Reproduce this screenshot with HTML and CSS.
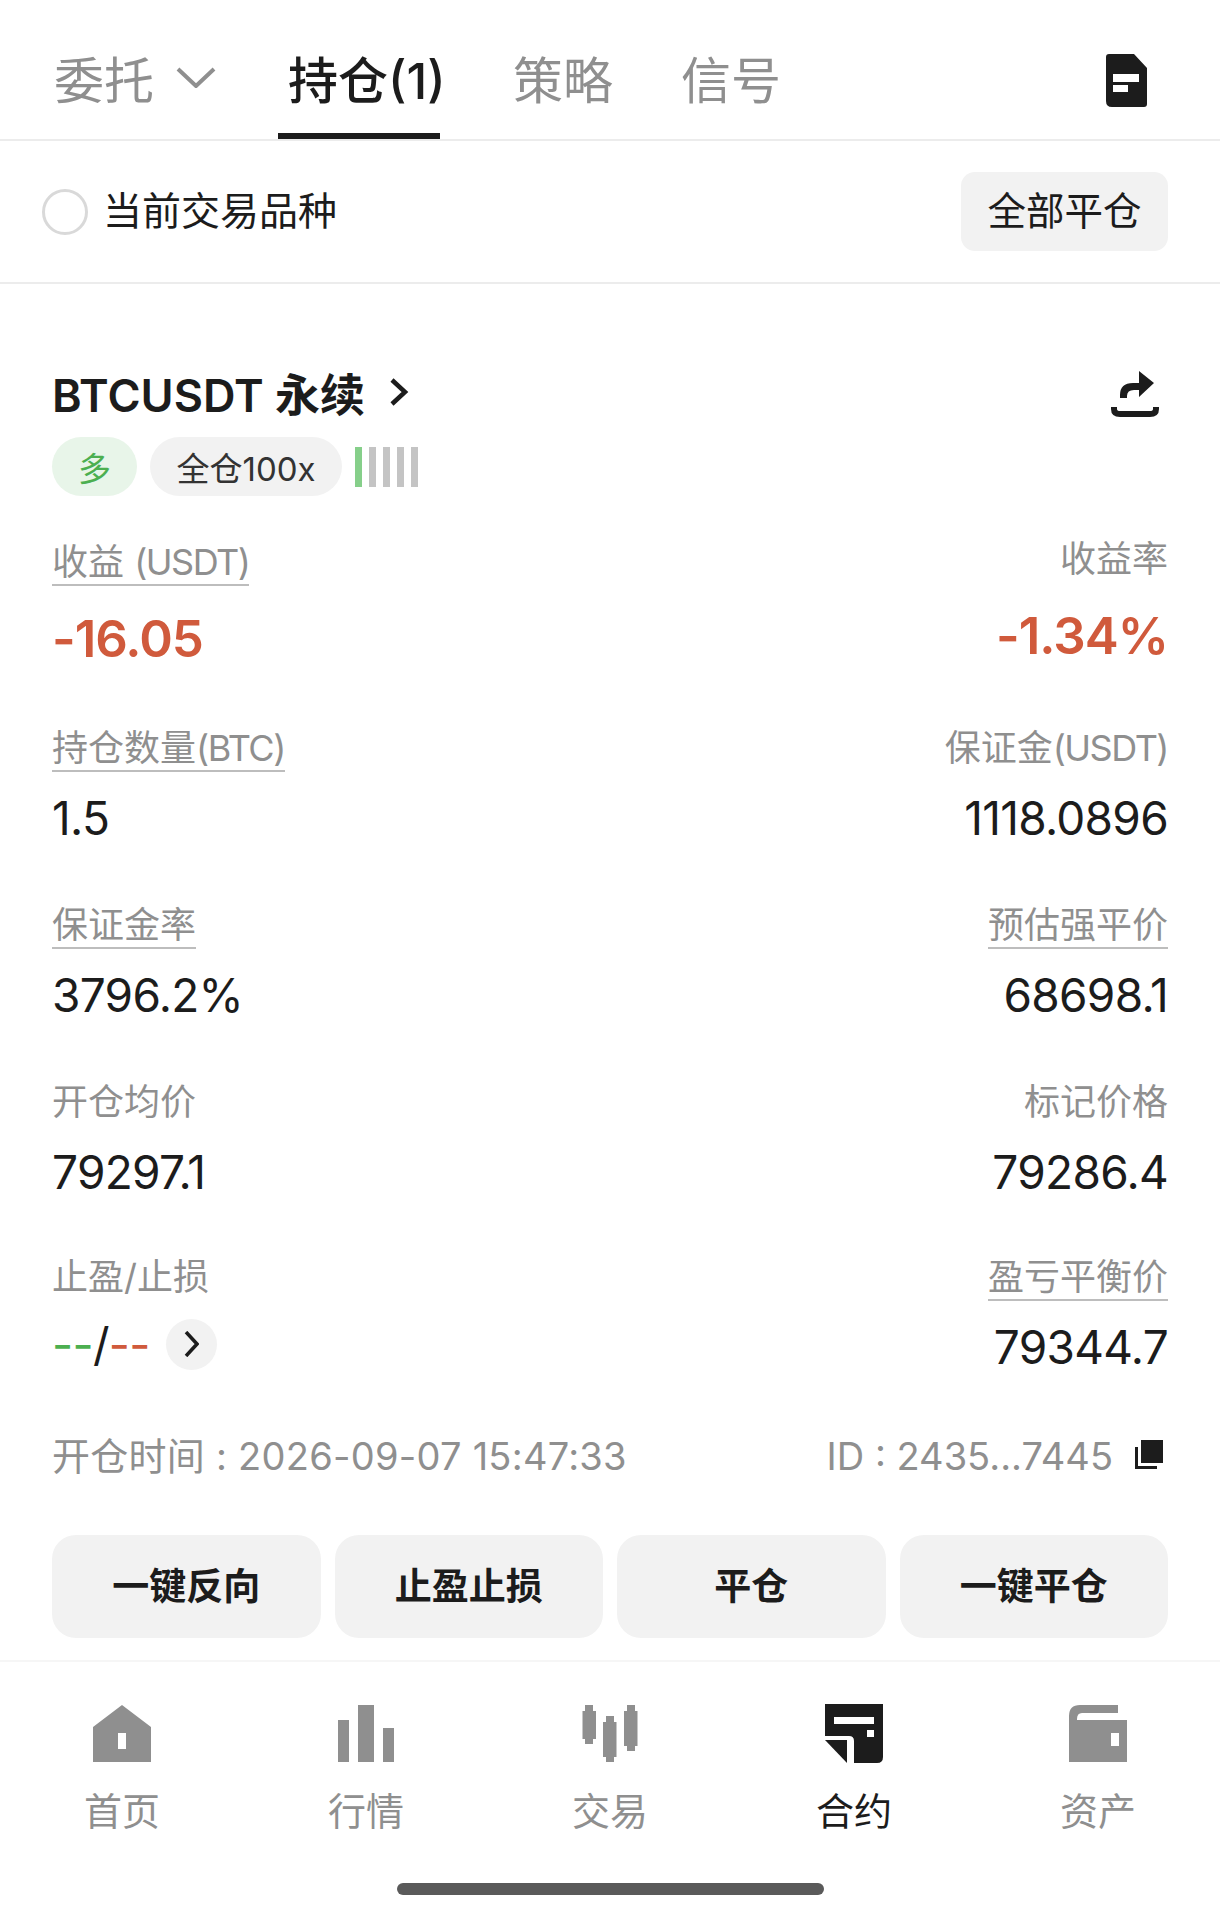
FILE: index.html
```html
<!DOCTYPE html>
<html lang="zh-CN">
<head>
  <meta charset="UTF-8" />
  <meta name="viewport" content="width=device-width, initial-scale=1.0">
  <title>持仓</title>
  <link rel="stylesheet" href="styles.css">
</head>
<body>

<!-- Tabs -->
<div class="tabs">
  <div class="tab tab-orders">委托
    <svg class="tab-caret" width="40" height="21" viewBox="0 0 40 21"><path d="M2 2 L20 19 L38 2" /></svg>
  </div>
  <div class="tab tab-active">持仓(1)</div>
  <div class="tab tab-strategy">策略</div>
  <div class="tab tab-signal">信号</div>
  <svg class="tab-doc" width="41" height="53" viewBox="0 0 41 53">
    <path fill-rule="evenodd" d="M3 0 H28 L41 14 V50 Q41 53 38 53 H6 Q0 53 0 47 V3 Q0 0 3 0 Z M7 20 V28 H33 V20 Z M7 31 V38 H22 V31 Z" />
  </svg>
</div>

<!-- Filter -->
<div class="filter">
  <div class="filter-left">
    <span class="radio"></span>
    <span class="filter-text">当前交易品种</span>
  </div>
  <div class="close-all">全部平仓</div>
</div>

<!-- Position card -->
<div class="card">
  <div class="card-title">
    <div class="symbol">BTCUSDT 永续
      <svg class="symbol-arrow" width="20" height="28" viewBox="0 0 20 28"><path d="M3 2 L16 14 L3 26" /></svg>
    </div>
    <svg class="share" width="48" height="46" viewBox="0 0 48 46">
      <path d="M9 27 V24 Q9 12 22 12 H28 V0 L43 12 L28 26 V19 H23 Q16 19 16 25 V27 Z" />
      <path class="share-tray" d="M3 36 V38 Q3 43 9 43 H39 Q45 43 45 38 V36" />
    </svg>
  </div>

  <div class="tags">
    <span class="tag tag-long">多</span>
    <span class="tag tag-mode">全仓100x</span>
    <span class="risk">
      <i class="risk-on"></i><i></i><i></i><i></i><i></i>
    </span>
  </div>

  <div class="stats">
    <div class="stat">
      <span class="stat-label dotted">收益 <span class="latin">(USDT)</span></span>
      <span class="stat-value big red">-16.05</span>
    </div>
    <div class="stat stat-right stat-up">
      <span class="stat-label">收益率</span>
      <span class="stat-value big red">-1.34%</span>
    </div>

    <div class="stat">
      <span class="stat-label dotted">持仓数量<span class="latin">(BTC)</span></span>
      <span class="stat-value">1.5</span>
    </div>
    <div class="stat stat-right">
      <span class="stat-label">保证金<span class="latin">(USDT)</span></span>
      <span class="stat-value">1118.0896</span>
    </div>

    <div class="stat">
      <span class="stat-label dotted">保证金率</span>
      <span class="stat-value">3796.2%</span>
    </div>
    <div class="stat stat-right">
      <span class="stat-label dotted">预估强平价</span>
      <span class="stat-value">68698.1</span>
    </div>

    <div class="stat">
      <span class="stat-label">开仓均价</span>
      <span class="stat-value">79297.1</span>
    </div>
    <div class="stat stat-right">
      <span class="stat-label">标记价格</span>
      <span class="stat-value">79286.4</span>
    </div>

    <div class="stat stat-last">
      <span class="stat-label">止盈/止损</span>
      <div class="tpsl">
        <span class="stat-value"><span class="green">--</span>/<span class="red">--</span></span>
        <span class="tpsl-btn">
          <svg width="15" height="26" viewBox="0 0 15 26"><path d="M2 1 L13 13 L2 25" /></svg>
        </span>
      </div>
    </div>
    <div class="stat stat-right stat-last">
      <span class="stat-label dotted">盈亏平衡价</span>
      <span class="stat-value">79344.7</span>
    </div>
  </div>

  <div class="meta">
    <span class="meta-time">开仓时间 : 2026-09-07 15:47:33</span>
    <span class="meta-id">ID : 2435...7445
      <svg width="28" height="29" viewBox="0 0 28 29">
        <rect x="6" y="0" width="22" height="23" />
        <path d="M0 7 H3 V26 H22 V29 H0 Z" />
      </svg>
    </span>
  </div>

  <div class="actions">
    <div class="action">一键反向</div>
    <div class="action">止盈止损</div>
    <div class="action">平仓</div>
    <div class="action">一键平仓</div>
  </div>
</div>

<!-- Bottom nav -->
<div class="nav">
  <div class="nav-item">
    <svg width="60" height="60" viewBox="0 0 60 60">
      <path fill-rule="evenodd" d="M30 2 L59 24 V59 H1 V24 Z M26 30 V46 H34 V30 Z" />
    </svg>
    <span>首页</span>
  </div>
  <div class="nav-item">
    <svg width="60" height="60" viewBox="0 0 60 60">
      <rect x="2" y="17" width="11" height="42" />
      <rect x="22" y="2" width="16" height="57" />
      <rect x="47" y="25" width="11" height="34" />
    </svg>
    <span>行情</span>
  </div>
  <div class="nav-item">
    <svg width="60" height="60" viewBox="0 0 60 60">
      <path d="M5 2 H13 V8 H16 V36 H13 V41 H5 V36 H2.500 V8 H5 Z" />
      <path d="M26 13 H34 V19 H36.500 V54 H34 V59 H26 V54 H23 V19 H26 Z" />
      <path d="M47 2 H55 V8 H57.500 V43 H55 V48 H47 V43 H44 V8 H47 Z" />
    </svg>
    <span>交易</span>
  </div>
  <div class="nav-item nav-active">
    <svg width="60" height="60" viewBox="0 0 60 60">
      <path fill-rule="evenodd" d="M1 1 H59 V54 Q59 60 53 60 H30 V38 Q30 33 25 33 H1 Z M10 14 V21 H50 V14 Z M43 27 V34 H50 V27 Z" />
      <path d="M1 37 H23 V60 Z" />
    </svg>
    <span>合约</span>
  </div>
  <div class="nav-item">
    <svg width="60" height="60" viewBox="0 0 60 60">
      <path fill-rule="evenodd" d="M12 2 H50 V10 H14 Q9 10 9 16 V17 H59 V59 H1 V13 Q1 2 12 2 Z M43 30 V43 H51 V30 Z" />
    </svg>
    <span>资产</span>
  </div>
</div>

<div class="home-bar-wrap"><div class="home-bar"></div></div>

</body>
</html>
```

FILE: styles.css
```css
/* ----------  BASE  ---------- */
:root {
  --ink:    #1c1c1c;
  --grey:   #8f8f8f;
  --soft:   #f2f2f2;
  --line:   #ececec;
  --red:    #d05a3c;
  --green:  #4caf50;
}

*{box-sizing:border-box}

body{
  margin:0;
  width:1220px;
  background:#fff;
  color:var(--ink);
  font-family:Inter,'Noto Sans CJK SC',sans-serif;
}

svg{display:block}

/* ----------  TABS  ---------- */
.tabs{
  display:flex; align-items:center;
  height:141px;
  padding-left:54px;
  border-bottom:2px solid var(--line);
  position:relative;
}
.tab{
  display:flex; align-items:center;
  height:139px;
  padding-top:14px;
  font-size:50px;
  color:var(--grey);
}
.tab-orders{width:224px}
.tab-caret{margin-left:22px;margin-top:2px}
.tab-caret path{fill:none;stroke:var(--grey);stroke-width:4}
.tab-active{
  width:235px;
  color:var(--ink);
  font-weight:500;
  padding-left:10px;
  position:relative;
}
.tab-active::after{
  content:"";
  position:absolute;
  left:0; bottom:0;
  width:162px; height:6px;
  background:var(--ink);
}
.tab-strategy{width:168px}
.tab-doc{margin-left:auto;margin-right:73px;margin-top:21px}
.tab-doc path{fill:var(--ink)}

/* ----------  FILTER  ---------- */
.filter{
  display:flex; align-items:center; justify-content:space-between;
  height:143px;
  padding:0 52px 0 42px;
  border-bottom:2px solid var(--line);
  font-size:38.500px;
}
.filter-left{display:flex;align-items:center;gap:15px}
.filter-text{font-size:39px;padding-bottom:8px}
.radio{
  width:46px; height:46px;
  border:3px solid #d9d9d9;
  border-radius:50%;
}
.close-all{
  display:flex; align-items:center; justify-content:center;
  width:207px; height:79px;
  padding-bottom:8px;
  background:var(--soft);
  border-radius:14px;
}

/* ----------  CARD  ---------- */
.card{padding:82px 52px 22px}
.card-title{
  display:flex; align-items:center; justify-content:space-between;
  height:56px;
}
.symbol{
  display:flex; align-items:center;
  padding-bottom:4px;
  font-size:45px; font-weight:600;
}
.symbol-arrow{margin-left:24px}
.symbol-arrow path{fill:none;stroke:var(--ink);stroke-width:4.500}
.share{margin-right:9px}
.share path{fill:var(--ink)}
.share .share-tray{fill:none;stroke:var(--ink);stroke-width:6}

.tags{
  display:flex; align-items:center;
  height:59px;
  margin-top:15px;
}
.tag{
  display:flex; align-items:center; justify-content:center;
  height:59px;
  border-radius:30px;
  font-size:33px;
}
.tag-long{width:85px;background:#e8f5e9;color:var(--green)}
.tag-mode{width:192px;margin-left:13px;background:var(--soft);color:#333}
.risk{display:flex;gap:7px;margin-left:13px}
.risk i{display:block;width:7px;height:40px;background:#c4c4c4}
.risk .risk-on{background:#86cf8a}

/* ----------  STATS  ---------- */
.stats{
  display:grid;
  grid-template-columns:1fr 1fr;
  row-gap:57px;
  margin-top:44px;
}
.stat{display:flex;flex-direction:column;align-items:flex-start}
.stat-right{align-items:flex-end}
.stat-up{margin-top:-3px}
.stat-last{margin-top:-2px}
.stat-label{
  font-size:36px; line-height:44px;
  color:var(--grey);
  border-bottom:2px solid transparent;
}
.latin{letter-spacing:-1.500px}
.dotted{border-bottom-color:#bdbdbd}
.stat-value{
  margin-top:18px;
  font-size:46px; line-height:56px;
  letter-spacing:-.7px;
  white-space:nowrap;
}
.big{margin-top:23px;font-size:51px;line-height:60px;font-weight:600;letter-spacing:-1px}
.red{color:var(--red)}
.green{color:var(--green)}
.tpsl{display:flex;align-items:center;margin-top:-3px}
.tpsl-btn{
  display:flex; align-items:center; justify-content:center;
  width:51px; height:51px;
  margin:18px 0 0 16px;
  border-radius:50%;
  background:var(--soft);
}
.tpsl-btn path{fill:none;stroke:var(--ink);stroke-width:3.500}

.meta{
  display:flex; align-items:center; justify-content:space-between;
  height:44px;
  margin-top:60px;
  font-size:38px;
  color:var(--grey);
}
.meta-time{letter-spacing:.25px;padding-bottom:7px}
.meta-id{display:flex;align-items:center;gap:22px;padding-right:5px;margin-top:-2px}
.meta-id svg{fill:var(--ink);margin-top:-3px}

.actions{
  display:grid;
  grid-template-columns:repeat(4,1fr);
  gap:14px;
  margin-top:56px;
}
.action{
  display:flex; align-items:center; justify-content:center;
  height:103px;
  padding-bottom:6px;
  background:var(--soft);
  border-radius:24px;
  font-size:37px; font-weight:600;
}

/* ----------  NAV  ---------- */
.nav{
  display:grid;
  grid-template-columns:repeat(5,1fr);
  border-top:2px solid #f6f6f6;
  padding-top:41px;
}
.nav-item{
  display:flex; flex-direction:column; align-items:center;
  font-size:38px; line-height:44px;
  color:var(--grey);
}
.nav-item svg{fill:var(--grey);margin-bottom:26px}
.nav-active{color:var(--ink)}
.nav-active svg{fill:var(--ink)}

.home-bar-wrap{display:flex;justify-content:center;padding-top:50px;padding-bottom:20px}
.home-bar{width:427px;height:12px;border-radius:6px;background:#5a5a5a}
```
